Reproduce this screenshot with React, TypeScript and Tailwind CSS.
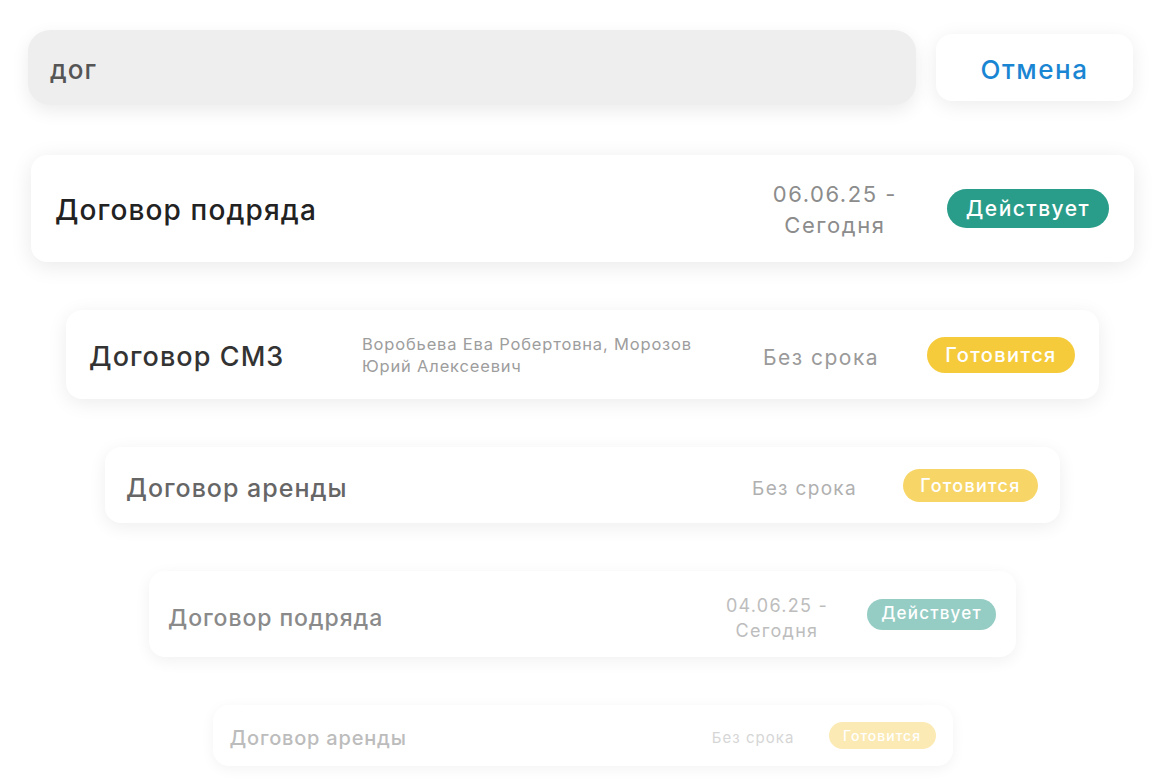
import React from "react";

type Card = {
  title: string;
  names?: string[];
  date: string[];
  status: "active" | "draft";
  width: string;
  height: string;
  padL: string;
  padR: string;
  shift: string;
  titleCls: string;
  dateCls: string;
  dateGap: string;
  badgeCls: string;
  shadow: string;
};

const cards: Card[] = [
  {
    title: "Договор подряда",
    date: ["06.06.25 -", "Сегодня"],
    status: "active",
    width: "w-[1103px]",
    height: "h-[107px]",
    padL: "pl-[24px]",
    padR: "pr-[25px]",
    shift: "pt-[2px]",
    titleCls: "text-[28px] text-[#222222]",
    dateCls: "text-[22px] leading-[31px] text-[#8c8c8c]",
    dateGap: "mr-[50px]",
    badgeCls: "h-[39px] w-[162px] text-[21px] bg-[#2a9d8a]",
    shadow: "shadow-[0_4px_22px_rgba(0,0,0,0.09)]",
  },
  {
    title: "Договор СМЗ",
    names: ["Воробьева Ева Робертовна, Морозов", "Юрий Алексеевич"],
    date: ["Без срока"],
    status: "draft",
    width: "w-[1033px]",
    height: "h-[89px]",
    padL: "pl-[23px]",
    padR: "pr-[24px]",
    shift: "pt-[6px]",
    titleCls: "text-[27px] text-[#333333]",
    dateCls: "text-[21px] leading-[30px] text-[#9a9a9a]",
    dateGap: "mr-[48px]",
    badgeCls: "h-[36px] w-[148px] text-[20px] bg-[#f5cb3c]",
    shadow: "shadow-[0_4px_20px_rgba(0,0,0,0.08)]",
  },
  {
    title: "Договор аренды",
    date: ["Без срока"],
    status: "draft",
    width: "w-[955px]",
    height: "h-[76px]",
    padL: "pl-[21px]",
    padR: "pr-[22px]",
    shift: "pt-[7px]",
    titleCls: "text-[25px] text-[#666666]",
    dateCls: "text-[19px] leading-[27px] text-[#b0b0b0]",
    dateGap: "mr-[46px]",
    badgeCls: "h-[33px] w-[135px] text-[18px] bg-[#f7d667]",
    shadow: "shadow-[0_4px_18px_rgba(0,0,0,0.07)]",
  },
  {
    title: "Договор подряда",
    date: ["04.06.25 -", "Сегодня"],
    status: "active",
    width: "w-[867px]",
    height: "h-[86px]",
    padL: "pl-[19px]",
    padR: "pr-[20px]",
    shift: "pt-[8px]",
    titleCls: "text-[23px] text-[#8a8a8a]",
    dateCls: "text-[18px] leading-[25px] text-[#bdbdbd]",
    dateGap: "mr-[39px]",
    badgeCls: "h-[31px] w-[129px] text-[17px] bg-[#95cdc5]",
    shadow: "shadow-[0_4px_16px_rgba(0,0,0,0.06)]",
  },
  {
    title: "Договор аренды",
    date: ["Без срока"],
    status: "draft",
    width: "w-[740px]",
    height: "h-[61px]",
    padL: "pl-[17px]",
    padR: "pr-[17px]",
    shift: "pt-[4px]",
    titleCls: "text-[20px] text-[#bcbcbc]",
    dateCls: "text-[15px] leading-[22px] text-[#d6d6d6]",
    dateGap: "mr-[34px]",
    badgeCls: "h-[27px] w-[107px] text-[14px] bg-[#fbeab4]",
    shadow: "shadow-[0_3px_14px_rgba(0,0,0,0.05)]",
  },
];

const font = { fontFamily: "Inter, 'Noto Sans', sans-serif" };

function ContractCard({ c }: { c: Card }) {
  return (
    <div
      className={`${c.width} ${c.height} ${c.padL} ${c.padR} ${c.shadow} flex items-center rounded-[16px] bg-white`}
    >
      <div
        className={`${c.titleCls} ${c.shift} font-medium tracking-[0.04em] whitespace-nowrap ${c.names ? "w-[273px]" : "flex-1"}`}
      >
        {c.title}
      </div>
      {c.names && (
        <div className="flex-1 text-[16.5px] leading-[22px] tracking-[0.05em] text-[#9d9d9d]">
          {c.names.map((n) => (
            <div key={n}>{n}</div>
          ))}
        </div>
      )}
      <div
        className={`${c.dateCls} ${c.dateGap} ${c.shift} text-center tracking-[0.07em] whitespace-nowrap`}
      >
        {c.date.map((d) => (
          <div key={d}>{d}</div>
        ))}
      </div>
      <div
        className={`${c.badgeCls} flex items-center justify-center rounded-full font-medium tracking-[0.07em] text-white`}
      >
        {c.status === "active" ? "Действует" : "Готовится"}
      </div>
    </div>
  );
}

export default function App() {
  return (
    <div className="min-h-[783px] w-[1164px] bg-white pt-[30px]" style={font}>
      <div className="ml-[28px] flex w-[1105px] items-center gap-[20px]">
        <div className="flex h-[75px] flex-1 items-center rounded-[22px] bg-[#eeeeee] pl-[22px] shadow-[0_6px_18px_rgba(0,0,0,0.08)]">
          <span className="pt-[4px] text-[26px] font-medium tracking-[0.04em] text-[#555555]">дог</span>
        </div>
        <button
          type="button"
          className="flex h-[67px] w-[197px] items-center justify-center rounded-[16px] bg-white pt-[4px] text-[26px] font-medium tracking-[0.06em] text-[#1a86d3] shadow-[0_4px_20px_rgba(0,0,0,0.08)]"
        >
          Отмена
        </button>
      </div>
      <div className="mt-[50px] flex flex-col items-center gap-[48px] pl-[1px]">
        {cards.map((c, i) => (
          <ContractCard key={i} c={c} />
        ))}
      </div>
    </div>
  );
}
